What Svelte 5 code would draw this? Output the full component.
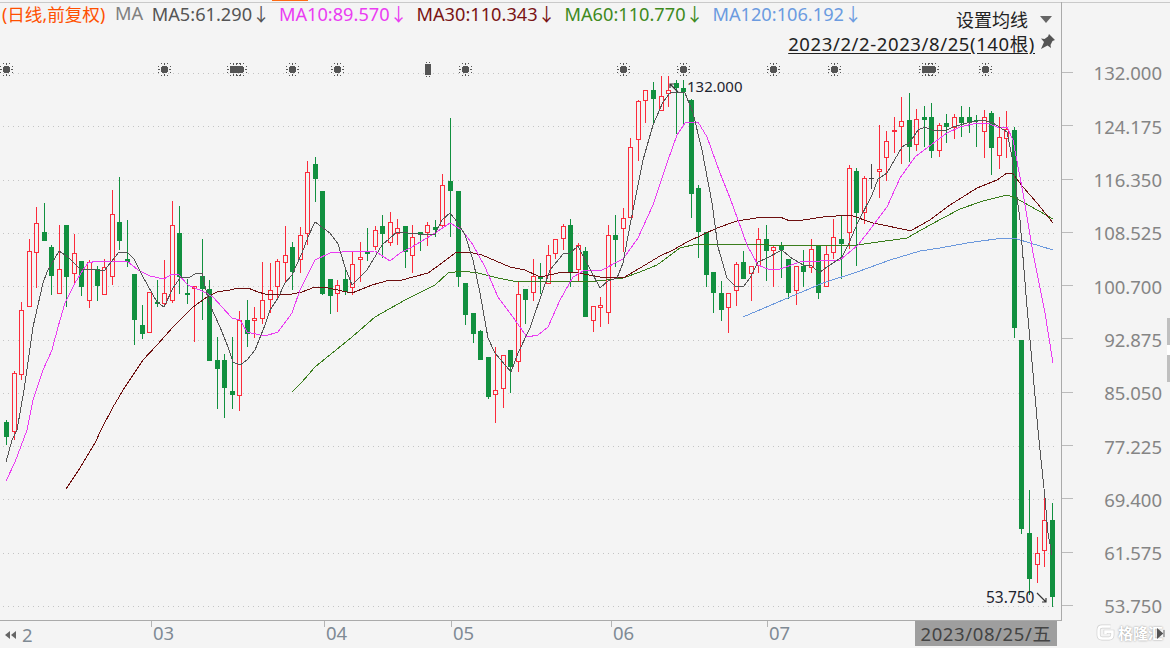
<script>
  // [up(1)/down(0)/flat(2), bodyTop, bodyBottom, high, low]
  const raw = `0 422 437 420 445|1 373 431 371 440|1 310 374 302 380|1 251 306 239 306|1 223 252 207 288|0 232 241 203 241|0 247 276 245 295|1 269 293 225 293|0 225 277 225 307|1 253 273 234 284
0 261 287 261 296|1 262 300 260 308|0 269 286 266 301|1 267 294 259 294|1 214 276 190 285|0 222 241 177 250|0 259 262 220 267|0 274 320 274 345|0 325 334 305 339|1 292 332 292 332
0 302 304 280 307|1 293 303 260 307|1 225 300 201 303|0 233 277 206 294|0 293 295 279 304|1 286 288 286 342|0 276 289 239 320|0 289 361 280 361|0 360 369 337 409|0 360 388 354 418
0 391 395 337 409|1 320 395 311 411|0 320 334 300 347|1 318 320 307 338|1 300 318 262 324|1 290 299 263 313|1 261 286 259 300|1 255 262 226 283|0 247 272 242 290|1 235 259 227 273
1 172 233 161 245|0 164 179 157 202|0 191 294 191 295|0 279 296 279 314|1 285 293 280 312|0 279 292 267 295|1 264 287 252 295|1 257 259 242 282|0 251 254 228 261|1 230 246 226 250
0 226 234 215 258|1 222 242 212 246|1 228 233 219 245|0 226 252 226 268|1 237 255 225 273|0 232 234 232 251|1 225 232 222 246|0 227 230 220 237|1 185 225 174 229|0 181 191 118 237
0 191 277 191 287|0 283 315 283 325|0 313 334 313 343|0 331 360 330 360|0 357 397 357 399|1 390 394 347 423|1 355 388 355 408|0 350 367 350 393|1 294 361 282 372|0 289 300 289 324
1 276 292 259 301|0 276 279 263 294|1 255 283 245 283|1 239 253 239 259|1 226 238 224 250|0 225 272 219 287|1 245 269 243 281|0 251 317 247 317|1 306 320 306 332|1 305 307 297 327
1 235 312 225 324|0 235 240 215 267|1 218 228 208 252|1 147 217 138 217|1 101 139 100 161|1 90 100 90 123|0 90 99 82 123|1 96 110 76 110|1 90 93 76 107|0 83 88 80 134
0 88 92 80 125|0 100 194 99 218|0 188 232 185 258|0 232 275 232 287|0 272 293 272 313|0 293 310 281 321|1 293 307 293 333|1 264 290 262 306|0 262 279 251 279|1 266 273 266 301
1 239 265 228 273|0 239 251 225 281|1 247 250 245 287|0 245 250 242 278|0 259 293 259 299|1 266 290 266 305|0 266 272 250 287|1 249 267 239 273|0 245 293 245 299|1 254 286 245 286
1 237 252 219 259|0 239 244 215 279|1 168 232 165 249|0 171 213 168 266|1 178 212 176 224|2 178 178 164 189|1 169 171 125 198|1 141 157 131 181|1 130 131 117 153|1 121 126 97 164
0 120 147 93 162|1 119 144 109 151|0 117 120 106 147|0 117 151 103 158|1 125 150 123 157|0 123 127 114 143|1 117 127 114 139|0 117 123 106 137|0 117 123 107 133|0 120 121 115 147
1 117 131 110 158|0 113 148 111 175|1 137 155 117 169|1 129 138 111 158|0 130 328 127 338|0 340 529 340 534|0 533 579 490 595|1 553 564 537 583|1 520 550 498 567|0 520 597 503 607`;

  const candles = raw.split(/[|\n]/).map((row, i) => {
    const [kind, top, bottom, high, low] = row.trim().split(' ').map(Number);
    return { x: Math.round(6.3 + 7.52 * i), kind, top, bottom, high, low };
  });

  const ma = [
    { color: '#3a7d1c', points: '292,392 302,382 315,367 352,337 375,317 405,300 435,285 448,273 462,271 478,273 498,278 513,281 530,282 597,281 623,278 640,272 657,265 680,248 697,244 747,244 790,246 857,245 907,238 930,225 960,209 983,201 1007,195 1013,197 1023,202 1053,219' },
    { color: '#6b98dc', points: '743,317 790,297 823,283 857,272 890,260 920,251 940,248 967,243 1003,238 1017,239 1053,250' },
    { color: '#6d0f0f', points: '66,489 80,468 95,443 101,430 113,407 125,387 143,360 157,345 173,327 193,307 207,297 217,292 230,290 238,288 248,288 258,292 265,294 292,294 302,292 315,287 328,288 352,293 372,285 390,280 402,280 428,273 442,263 455,253 468,252 482,255 510,267 525,270 540,277 563,272 573,272 600,277 623,278 640,268 660,256 673,250 687,242 717,228 737,221 763,217 780,217 790,221 803,220 823,217 850,215 873,223 907,230 912,230 930,220 950,205 977,188 997,180 1007,173 1013,174 1023,187 1037,203 1053,223' },
    { color: '#ea3cf2', points: '6,481 15,462 27,430 33,400 43,370 52,350 58,327 65,303 75,283 83,270 88,263 97,261 110,262 127,261 138,270 150,276 164,279 172,274 178,274 188,285 202,291 213,297 222,307 232,318 240,320 247,332 260,335 265,336 278,332 292,313 300,290 315,260 330,253 342,252 375,251 390,261 400,253 412,247 435,233 450,223 462,230 473,245 485,267 498,297 515,320 527,337 538,335 548,327 560,300 573,277 585,270 600,271 623,259 638,238 653,205 667,163 677,135 685,123 698,122 707,137 720,173 730,198 738,220 747,245 758,265 770,270 780,269 800,262 840,260 858,245 872,227 887,207 900,178 915,157 927,148 947,133 960,127 977,123 987,123 1000,128 1007,127 1013,140 1023,193 1033,253 1045,313 1053,363' },
    { color: '#555555', points: '6,462 12,440 17,430 24,390 33,327 43,283 47,272 59,251 68,257 80,269 90,269 104,271 119,252 127,252 134,259 143,277 157,302 164,307 173,288 180,278 190,277 195,274 202,273 209,303 220,327 228,347 233,362 240,365 247,360 255,350 265,325 270,310 278,298 285,283 292,275 302,253 308,237 315,222 330,233 338,244 345,267 352,285 367,270 382,245 397,232 418,234 435,234 442,220 450,213 458,223 465,235 473,260 480,293 488,338 495,353 511,372 518,353 530,328 543,290 550,270 563,254 570,253 578,246 600,288 608,281 617,278 623,263 631,220 643,160 653,125 663,102 670,93 677,92 685,93 693,113 702,150 712,203 718,247 727,278 735,286 743,287 750,278 758,262 767,258 782,250 790,257 803,265 812,266 819,273 827,267 842,257 849,243 858,222 872,195 878,179 887,173 902,147 910,142 918,130 925,127 932,130 947,130 953,127 967,123 983,120 993,123 1007,132 1012,157 1017,197 1020,220 1027,307 1033,373 1038,430 1040,450 1045,498 1048,533 1052,555' },
  ];

  const prices = ['132.000', '124.175', '116.350', '108.525', '100.700', '92.875', '85.050', '77.225', '69.400', '61.575', '53.750'];
  const gridYs = prices.map((_, i) => Math.round(73 + i * 53.3) + 0.5);
  const signals = [6, 164, 233, 236, 240, 292, 337, 465, 623, 683, 773, 834, 925, 928, 932, 985];

  const legend = [
    { text: 'MA5:61.290↓', cls: 'l5' },
    { text: 'MA10:89.570↓', cls: 'l10' },
    { text: 'MA30:110.343↓', cls: 'l30' },
    { text: 'MA60:110.770↓', cls: 'l60' },
    { text: 'MA120:106.192↓', cls: 'l120' },
  ];
</script>

<div class="app">
  <div class="tab-mark"></div>

  <div class="pane">
    <svg class="plot" viewBox="0 3 1061 618" width="1061" height="618">
      {#each gridYs as y}
        <line class="grid" x1="3" x2="1058" y1={y} y2={y} />
      {/each}

      <g shape-rendering="crispEdges">
        {#each signals as x}
          <g transform="translate({x} 69)" fill="#555">
            <path d="M-2 -3 H3 V-2 H4 V3 H3 V4 H-2 V3 H-3 V-2 H-2 Z" />
            <!-- spikes round the marker -->
            <path d="M0 -6 h1 v2 h-1 Z M-3 -6 h1 v1 h-1 Z M3 -6 h1 v1 h-1 Z M0 5 h1 v2 h-1 Z M-3 6 h1 v1 h-1 Z M3 6 h1 v1 h-1 Z M-6 0 h2 v1 h-2 Z M-6 -3 h1 v1 h-1 Z M-6 3 h1 v1 h-1 Z M5 0 h2 v1 h-2 Z M6 -3 h1 v1 h-1 Z M6 3 h1 v1 h-1 Z" />
          </g>
        {/each}
        <g transform="translate(427 69)" fill="#555">
          <rect x="-2" y="-5" width="6" height="11" />
          <path d="M-1 -7 h1 v1 h-1 Z M2 -7 h1 v1 h-1 Z M-1 7 h1 v1 h-1 Z M2 7 h1 v1 h-1 Z" />
        </g>

        {#each candles as c}
          {#if c.kind === 1}
            <line x1={c.x + 0.5} x2={c.x + 0.5} y1={c.high} y2={c.top} stroke="#fb2b3b" />
            <line x1={c.x + 0.5} x2={c.x + 0.5} y1={c.bottom} y2={c.low} stroke="#fb2b3b" />
            <rect x={c.x - 1.5} y={c.top + 0.5} width="4" height={c.bottom - c.top} fill="#f4f4f4" stroke="#fb2b3b" />
          {:else if c.kind === 0}
            <line x1={c.x + 0.5} x2={c.x + 0.5} y1={c.high} y2={c.low} stroke="#11903f" />
            <rect x={c.x - 2} y={c.top} width="5" height={c.bottom - c.top} fill="#11903f" />
          {:else}
            <line x1={c.x + 0.5} x2={c.x + 0.5} y1={c.high} y2={c.low} stroke="#444" />
            <line x1={c.x - 2} x2={c.x + 3} y1={c.top + 0.5} y2={c.top + 0.5} stroke="#444" />
          {/if}
        {/each}
      </g>

      {#each ma as m}
        <polyline class="ma" points={m.points} stroke={m.color} />
      {/each}

      <g class="arrow">
        <path d="M678 92 L670 84 M670 88 V84 H674" />
        <path d="M1037 593 L1046 602 M1046 598 V602 H1042" />
      </g>
    </svg>

    <div class="legend">
      <span class="lead">(日线,前复权)</span>
      <span class="ma-word">MA</span>
      {#each legend as l}
        <span class={l.cls}>{l.text}</span>
      {/each}
    </div>

    <div class="settings">
      <div class="set-btn">
        <span>设置均线</span>
        <i class="caret"></i>
      </div>
      <div class="range">
        <span>2023/2/2-2023/8/25(140根)</span>
        <svg class="pin" viewBox="0 0 18 18" width="18" height="18">
          <path d="M11 1 L17 7 L14.5 8 L12.5 12 L13 15 L9.5 12.5 L3 16 L6 9 L3 5.5 L6.5 6 L10 3.5 Z" fill="#555" />
        </svg>
      </div>
    </div>

    <span class="tag high">132.000</span>
    <span class="tag low">53.750</span>
  </div>

  <div class="yaxis">
    {#each prices as p}
      <div class="yrow"><i></i><span>{p}</span></div>
    {/each}
  </div>

  <div class="xaxis">
    <div class="month first">
      <svg viewBox="0 0 12 10" width="12" height="10"><path d="M0 5 L5 1 V9 Z M6 5 L11 1 V9 Z" fill="#666" /></svg>
      <span>2</span>
    </div>
    <div class="month m3">03</div>
    <div class="month m4">04</div>
    <div class="month m5">05</div>
    <div class="month m6">06</div>
    <div class="month m7">07</div>
    <div class="cursor-date">2023/08/25/五</div>
  </div>

  <div class="brand">
    <svg viewBox="0 0 22 22" width="19" height="19">
      <path class="mark-under" d="M17 4 H7 Q3 4 3 8 V14 Q3 18 7 18 H15 Q19 18 19 14 V10 H11 V13" />
      <path class="mark" d="M17 4 H7 Q3 4 3 8 V14 Q3 18 7 18 H15 Q19 18 19 14 V10 H11 V13" />
    </svg>
    <span class="brand-name">格隆汇</span>
    <svg class="next" viewBox="0 0 10 12" width="9" height="11"><path d="M0 0 L7 6 L0 12 Z" fill="#555" /><rect x="7" y="2" width="1.5" height="8" fill="#888" /></svg>
  </div>

  <div class="scroll-thumb"><b></b></div>
</div>

<style>
  :global(body) { margin: 0; background: #f4f4f4; }
  .app {
    position: relative;
    width: 1170px; height: 648px; overflow: hidden; box-sizing: border-box;
    padding-top: 2px;
    display: grid; grid-template-columns: 1062px 108px; grid-template-rows: 619px 27px;
    background: #f4f4f4;
    font-family: "Noto Sans", "Noto Sans CJK SC", sans-serif;
  }
  .app::before { content: ''; position: absolute; left: 0; right: 0; top: 2px; height: 1px; background: #c9c9c9; }
  .tab-mark { position: absolute; left: 272px; top: 0; width: 36px; height: 1px; background: #ff6a13; }

  .pane { position: relative; border-right: 1px solid #aaa; border-bottom: 1px solid #aaa; }
  .plot { display: block; position: absolute; left: 0; top: 1px; }
  .grid { stroke: #c4c4c4; stroke-dasharray: 1 4; }
  .ma { fill: none; stroke-width: 1; shape-rendering: crispEdges; }
  .arrow path { fill: none; stroke: #333; stroke-width: 1.2; }

  .legend {
    position: absolute; left: 2px; top: -1px; height: 24px;
    display: flex; align-items: center; gap: 8.7px;
    font-size: 18.2px; white-space: nowrap;
  }
  .lead { color: #ff5000; font-size: 17.6px; margin-right: 1px; }
  .ma-word { color: #808080; }
  .l5 { color: #555; }
  .l10 { color: #ea3cf2; }
  .l30 { color: #7a1414; }
  .l60 { color: #3f8a1e; }
  .l120 { color: #6b9be0; }

  .settings { position: absolute; right: 3px; top: 1px; width: 270px; font-size: 18px; color: #222; }
  .set-btn {
    margin-left: auto; width: 110px; height: 32px; box-sizing: border-box;
    display: flex; align-items: center; gap: 12px; padding-left: 8px;
  }
  .caret { width: 0; height: 0; border: 6.5px solid transparent; border-top: 7px solid #666; border-bottom: 0; }
  .range {
    display: flex; align-items: center; gap: 3px; justify-content: flex-end;
    padding-right: 2px; margin-top: -1px; line-height: 20px; white-space: nowrap;
  }
  .range span { font-size: 18.5px; letter-spacing: 0.6px; text-decoration: underline; text-underline-offset: 2px; }
  .pin { margin-top: -4px; }

  .tag { position: absolute; color: #1d2430; line-height: 18px; }
  .high { left: 687px; top: 75px; font-size: 15px; }
  .low { left: 986px; top: 586px; font-size: 15.5px; }

  .yaxis { padding-top: 44.3px; color: #858585; font-size: 18.5px; }
  .yrow { height: 53.3px; display: flex; align-items: center; }
  .yrow i { width: 11px; height: 1px; margin-top: -1px; background: #bbb; }
  .yrow span { margin-left: auto; padding-right: 8px; }

  .xaxis { display: flex; font-size: 18.5px; color: #7f8a94; line-height: 24px; }
  .month { box-sizing: border-box; height: 27px; padding-left: 2px; position: relative; }
  .month::before { content: ''; position: absolute; left: 0; top: 0; width: 1px; height: 6px; background: #b5b5b5; }
  .first { width: 151px; display: flex; align-items: center; gap: 5px; padding-left: 5px; }
  .first::before { display: none; }
  .m3 { width: 173px; }
  .m4 { width: 127px; }
  .m5 { width: 160px; }
  .m6 { width: 156px; }
  .m7 { width: 148px; }
  .cursor-date {
    width: 142px; height: 25px; background: #9e9e9e; color: #444; text-align: center; line-height: 25px;
    letter-spacing: 0.6px; white-space: nowrap;
  }

  .brand { position: relative; display: flex; align-items: center; gap: 3px; padding-left: 34px; height: 22px; white-space: nowrap; }
  .mark { fill: none; stroke: #fff; stroke-width: 3; }
  .mark-under { fill: none; stroke: #cfcfcf; stroke-width: 4.5; }
  .brand-name { color: #fff; font-size: 15px; font-weight: 700; text-shadow: 0 0 2px #888; }
  .next { position: absolute; left: 95px; top: 7px; }

  .scroll-thumb {
    position: absolute; right: 0; top: 318px; width: 3px; height: 64px; background: #bfbfbf;
    display: flex; align-items: center;
  }
  .scroll-thumb b { width: 3px; height: 10px; background: #fff; }
</style>
